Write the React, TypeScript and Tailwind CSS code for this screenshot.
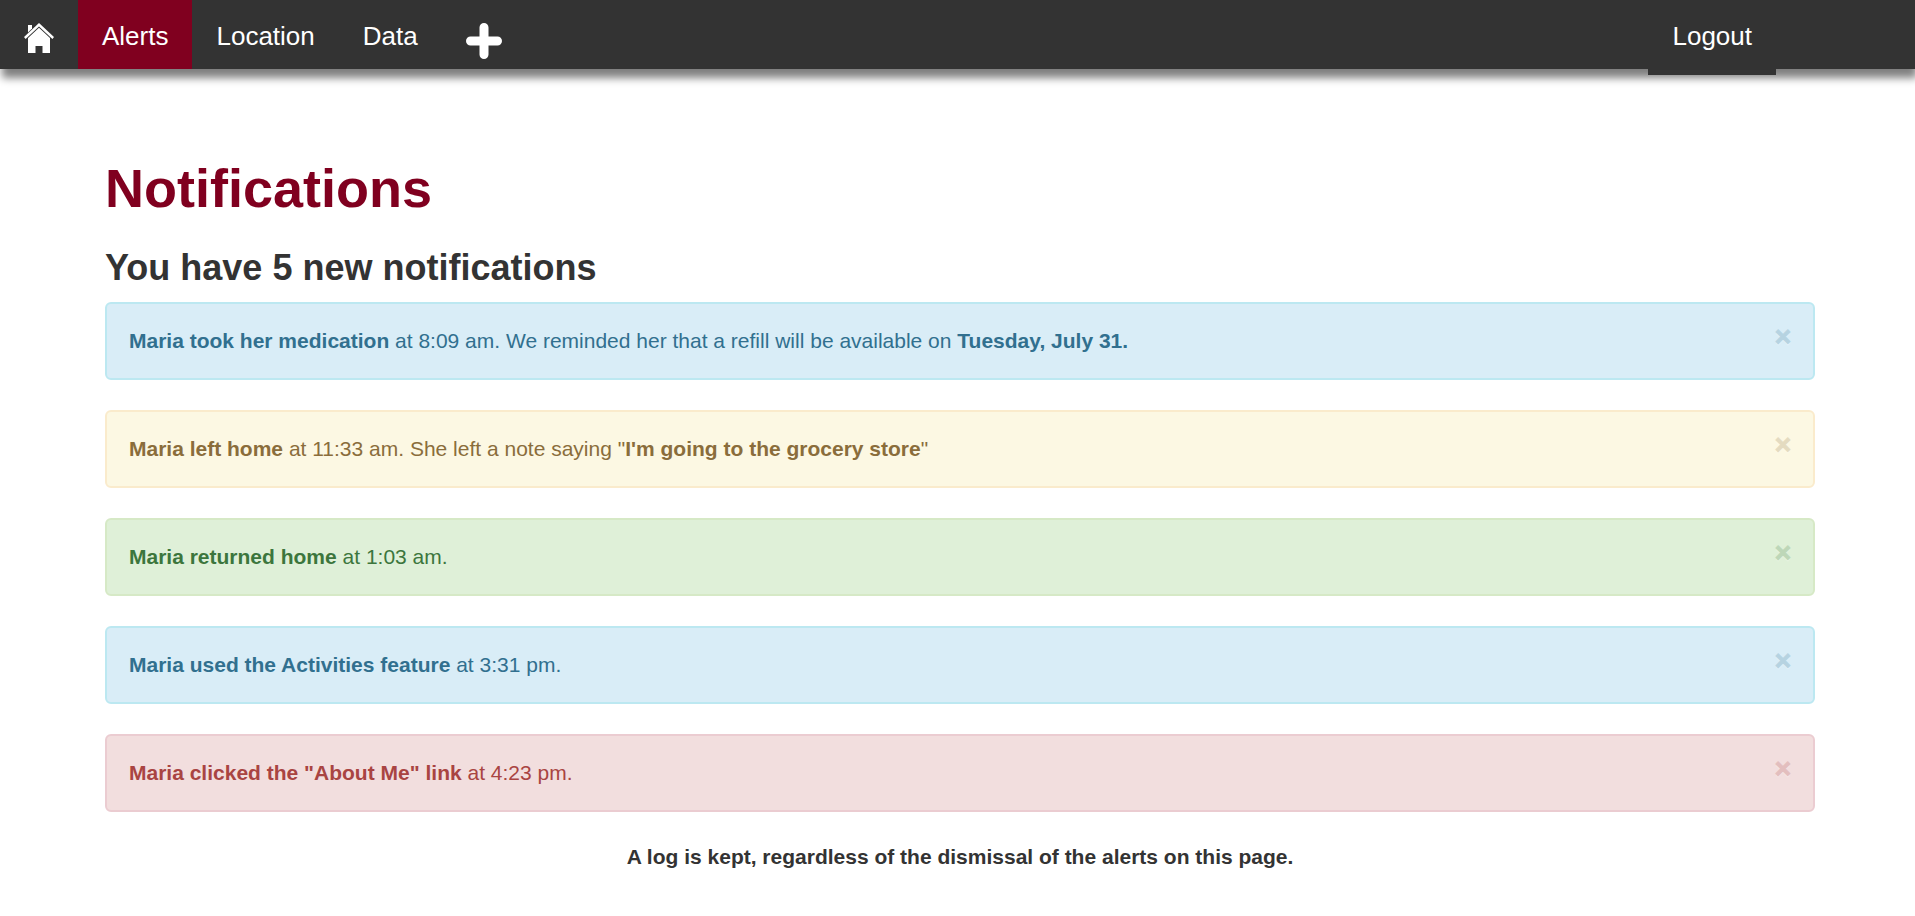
import { useState } from "react";
import type { ReactNode } from "react";

type Tone = "info" | "warning" | "success" | "danger";

const tones: Record<Tone, string> = {
  info: "bg-[#d9edf7] border-[#bce8f1] text-[#31708f]",
  warning: "bg-[#fcf8e3] border-[#faebcc] text-[#8a6d3b]",
  success: "bg-[#dff0d8] border-[#d6e9c6] text-[#3c763d]",
  danger: "bg-[#f2dede] border-[#ebccd1] text-[#a94442]",
};

const notifications: { id: number; tone: Tone; body: ReactNode }[] = [
  {
    id: 1,
    tone: "info",
    body: (
      <>
        <strong>Maria took her medication</strong> at 8:09 am. We reminded her that a refill will be available on{" "}
        <strong>Tuesday, July 31.</strong>
      </>
    ),
  },
  {
    id: 2,
    tone: "warning",
    body: (
      <>
        <strong>Maria left home</strong> at 11:33 am. She left a note saying "
        <strong>I'm going to the grocery store</strong>"
      </>
    ),
  },
  {
    id: 3,
    tone: "success",
    body: (
      <>
        <strong>Maria returned home</strong> at 1:03 am.
      </>
    ),
  },
  {
    id: 4,
    tone: "info",
    body: (
      <>
        <strong>Maria used the Activities feature</strong> at 3:31 pm.
      </>
    ),
  },
  {
    id: 5,
    tone: "danger",
    body: (
      <>
        <strong>Maria clicked the "About Me" link</strong> at 4:23 pm.
      </>
    ),
  },
];

function HomeIcon() {
  return (
    <svg width="30" height="30" viewBox="0 0 30 30" fill="#fff" aria-hidden="true">
      <path d="M4 2h4v3.6L4 9.6z" />
      <path d="M15 0 0 14l1.6 1.9L15 3.4l13.4 12.5L30 14z" />
      <path d="M15 4.7 4 15V30h7.5v-7h7v7H26V15z" />
    </svg>
  );
}

function PlusIcon() {
  return (
    <svg width="36" height="36" viewBox="0 0 36 36" stroke="#fff" strokeWidth="9" strokeLinecap="round" aria-hidden="true">
      <path d="M18 4.5v27M4.5 18h27" />
    </svg>
  );
}

function NavBar() {
  return (
    <nav className="flex h-[69px] bg-[#333] pr-[139px] text-[26px] leading-[37px] text-white shadow-[2px_9px_8px_gray]">
      <a href="#home" aria-label="Home" className="px-6 pt-[23px]">
        <HomeIcon />
      </a>
      <a href="#alerts" aria-current="page" className="bg-[#80001f] px-6 pt-[18px]">
        Alerts
      </a>
      <a href="#location" className="px-6 pt-[18px]">
        Location
      </a>
      <a href="#data" className="px-6 pt-[18px]">
        Data
      </a>
      <a href="#add" aria-label="Add" className="px-6 pt-[23px]">
        <PlusIcon />
      </a>
      <a href="#logout" className="ml-auto h-[75px] bg-[#333] px-6 pt-[18px]">
        Logout
      </a>
    </nav>
  );
}

export default function App() {
  const [dismissed, setDismissed] = useState<number[]>([]);
  return (
    <div className="font-['Liberation_Sans',Arial,sans-serif] text-[21px] leading-[30px] text-[#333]">
      <NavBar />
      <main className="pt-[89px] pr-[100px] pl-[105px]">
        <h1 className="text-[54px] leading-[60px] font-bold text-[#80001f]">Notifications</h1>
        <h2 className="mt-[30px] mb-[14px] text-[36px] leading-[40px] font-bold">You have 5 new notifications</h2>
        <div className="flex flex-col gap-[30px]">
          {notifications
            .filter((n) => !dismissed.includes(n.id))
            .map((n) => (
              <div key={n.id} role="alert" className={`flex items-start justify-between rounded-md border-2 p-[22px] ${tones[n.tone]}`}>
                <p>{n.body}</p>
                <button
                  type="button"
                  aria-label="Dismiss"
                  className="-mt-[5px] cursor-pointer text-[28px] leading-[32px] font-bold opacity-20 [-webkit-text-stroke:1px_currentColor] [text-shadow:0_2px_0_#fff]"
                  onClick={() => setDismissed([...dismissed, n.id])}
                >
                  ×
                </button>
              </div>
            ))}
        </div>
        <p className="mt-[30px] text-center font-bold">A log is kept, regardless of the dismissal of the alerts on this page.</p>
      </main>
    </div>
  );
}
